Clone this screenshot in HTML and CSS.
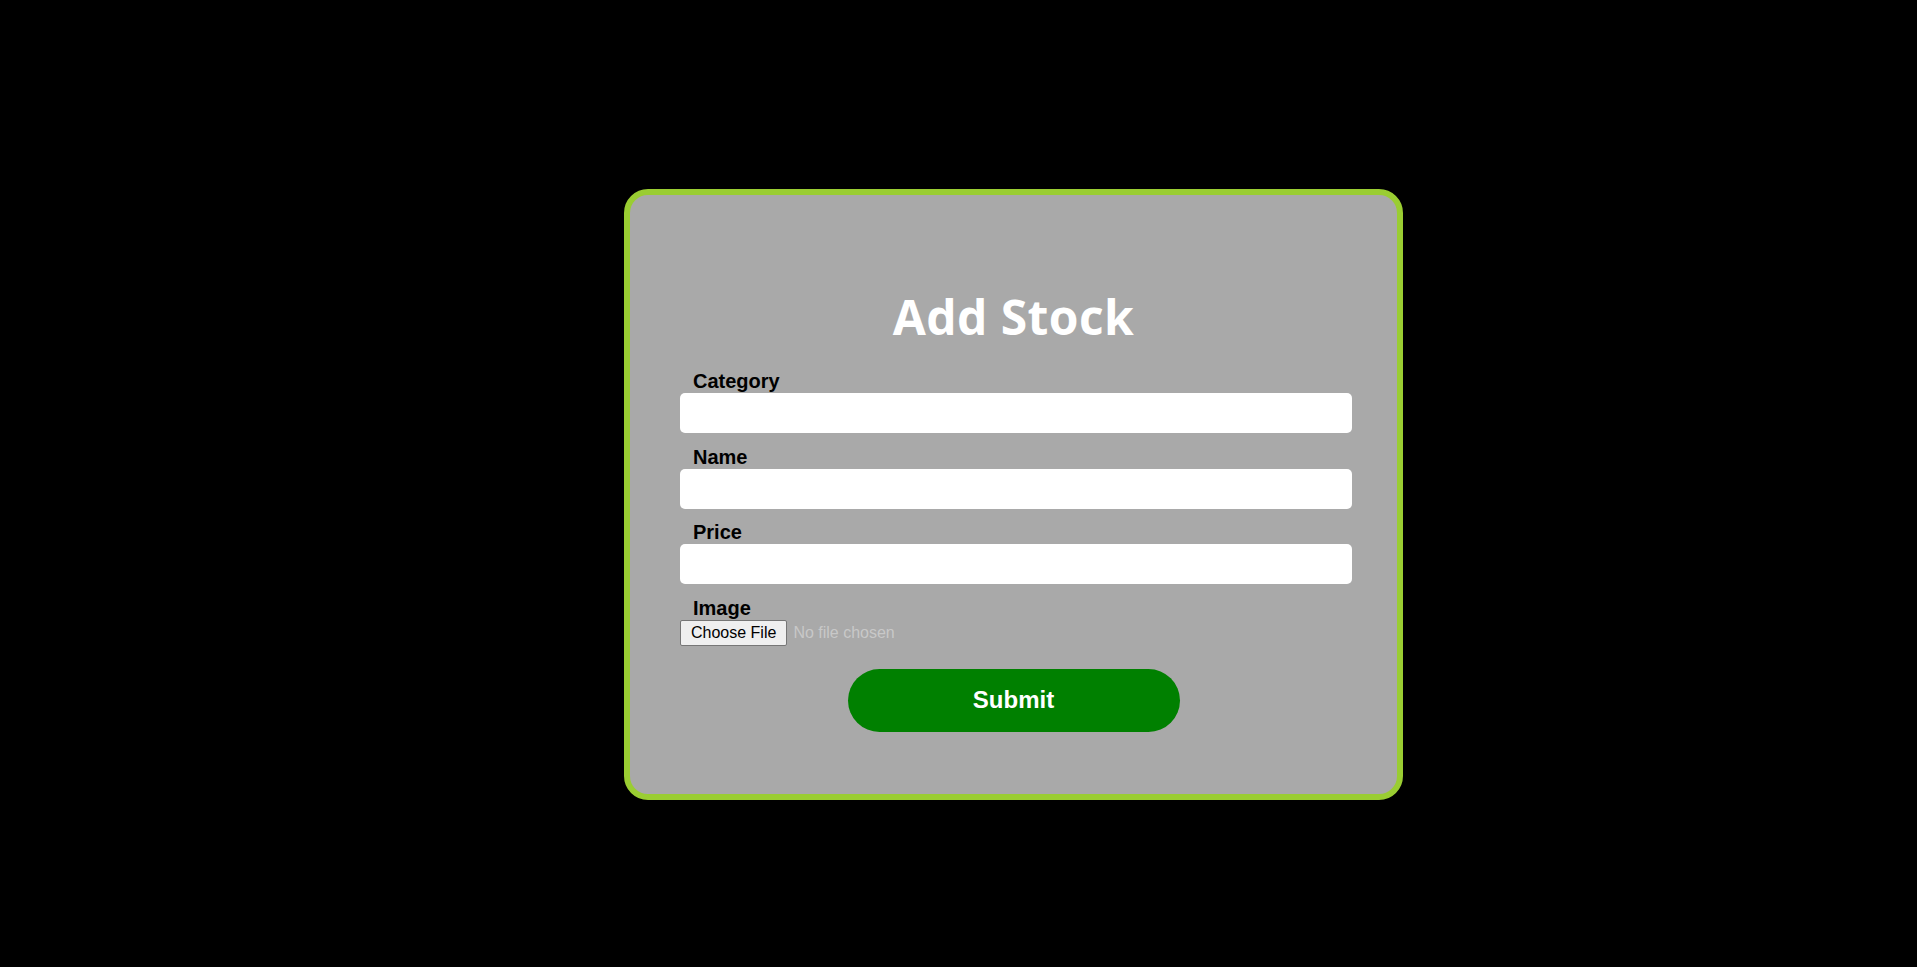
FILE: index.html
```html
<!DOCTYPE html>
<html lang="en">
<head>
<meta charset="utf-8">
<title>Add Stock</title>
<link rel="stylesheet" href="styles.css">
</head>
<body>
<main class="page">
  <form class="card">
    <h1 class="title">Add Stock</h1>
    <label class="label" for="category">Category</label>
    <input class="field" id="category" type="text">
    <label class="label" for="name">Name</label>
    <input class="field" id="name" type="text">
    <label class="label" for="price">Price</label>
    <input class="field" id="price" type="text">
    <label class="label" for="image">Image</label>
    <input class="file" id="image" type="file">
    <div class="actions">
      <button class="submit" type="button">Submit</button>
    </div>
  </form>
</main>
</body>
</html>
```
FILE: styles.css
```css
html, body {
  margin: 0;
  padding: 0;
  background: #000;
}
.page {
  height: 967px;
  display: flex;
  justify-content: center;
  align-items: flex-start;
  padding-top: 189px;
  box-sizing: border-box;
  padding-left: 110px;
}
.card {
  width: 779px;
  height: 611px;
  box-sizing: border-box;
  background: #a9a9a9;
  border: 6px solid #9acd32;
  border-radius: 24px;
  padding: 98px 45px 0 50px;
  display: flex;
  flex-direction: column;
  align-items: flex-start;
  font-family: "Liberation Sans", Arial, sans-serif;
}
.title {
  align-self: stretch;
  margin: 0 -45px 29px -50px;
  text-align: center;
  font-family: "Open Sans", sans-serif;
  font-weight: 700;
  font-size: 48px;
  line-height: 48px;
  color: #fff;
  letter-spacing: 0.4px;
}
.label {
  display: block;
  font-size: 20px;
  font-weight: 700;
  line-height: 23px;
  color: #000;
  padding-left: 13px;
}
.field {
  display: block;
  width: 672px;
  height: 40px;
  box-sizing: border-box;
  margin: 0 0 12.5px 0;
  border: none;
  border-radius: 5px;
  background: #fff;
  padding: 0 10px;
  font-size: 16px;
}
.file {
  display: block;
  margin: 0;
  font-family: "Liberation Sans", Arial, sans-serif;
  font-size: 16px;
  color: #c8c8c8;
  height: 26px;
}
.file::file-selector-button {
  font-family: "Liberation Sans", Arial, sans-serif;
  font-size: 16px;
  color: #000;
  background: #efefef;
  border: 1px solid #767676;
  border-radius: 2px;
  height: 26px;
  padding: 0 10px;
  margin-right: 6px;
}
.actions {
  align-self: stretch;
  margin: 23px -45px 0 -50px;
  display: flex;
  justify-content: center;
}
.submit {
  width: 332px;
  height: 63px;
  border: none;
  border-radius: 32px;
  background: #008000;
  color: #fff;
  font-family: "Liberation Sans", Arial, sans-serif;
  font-size: 24px;
  font-weight: 700;
}
```
